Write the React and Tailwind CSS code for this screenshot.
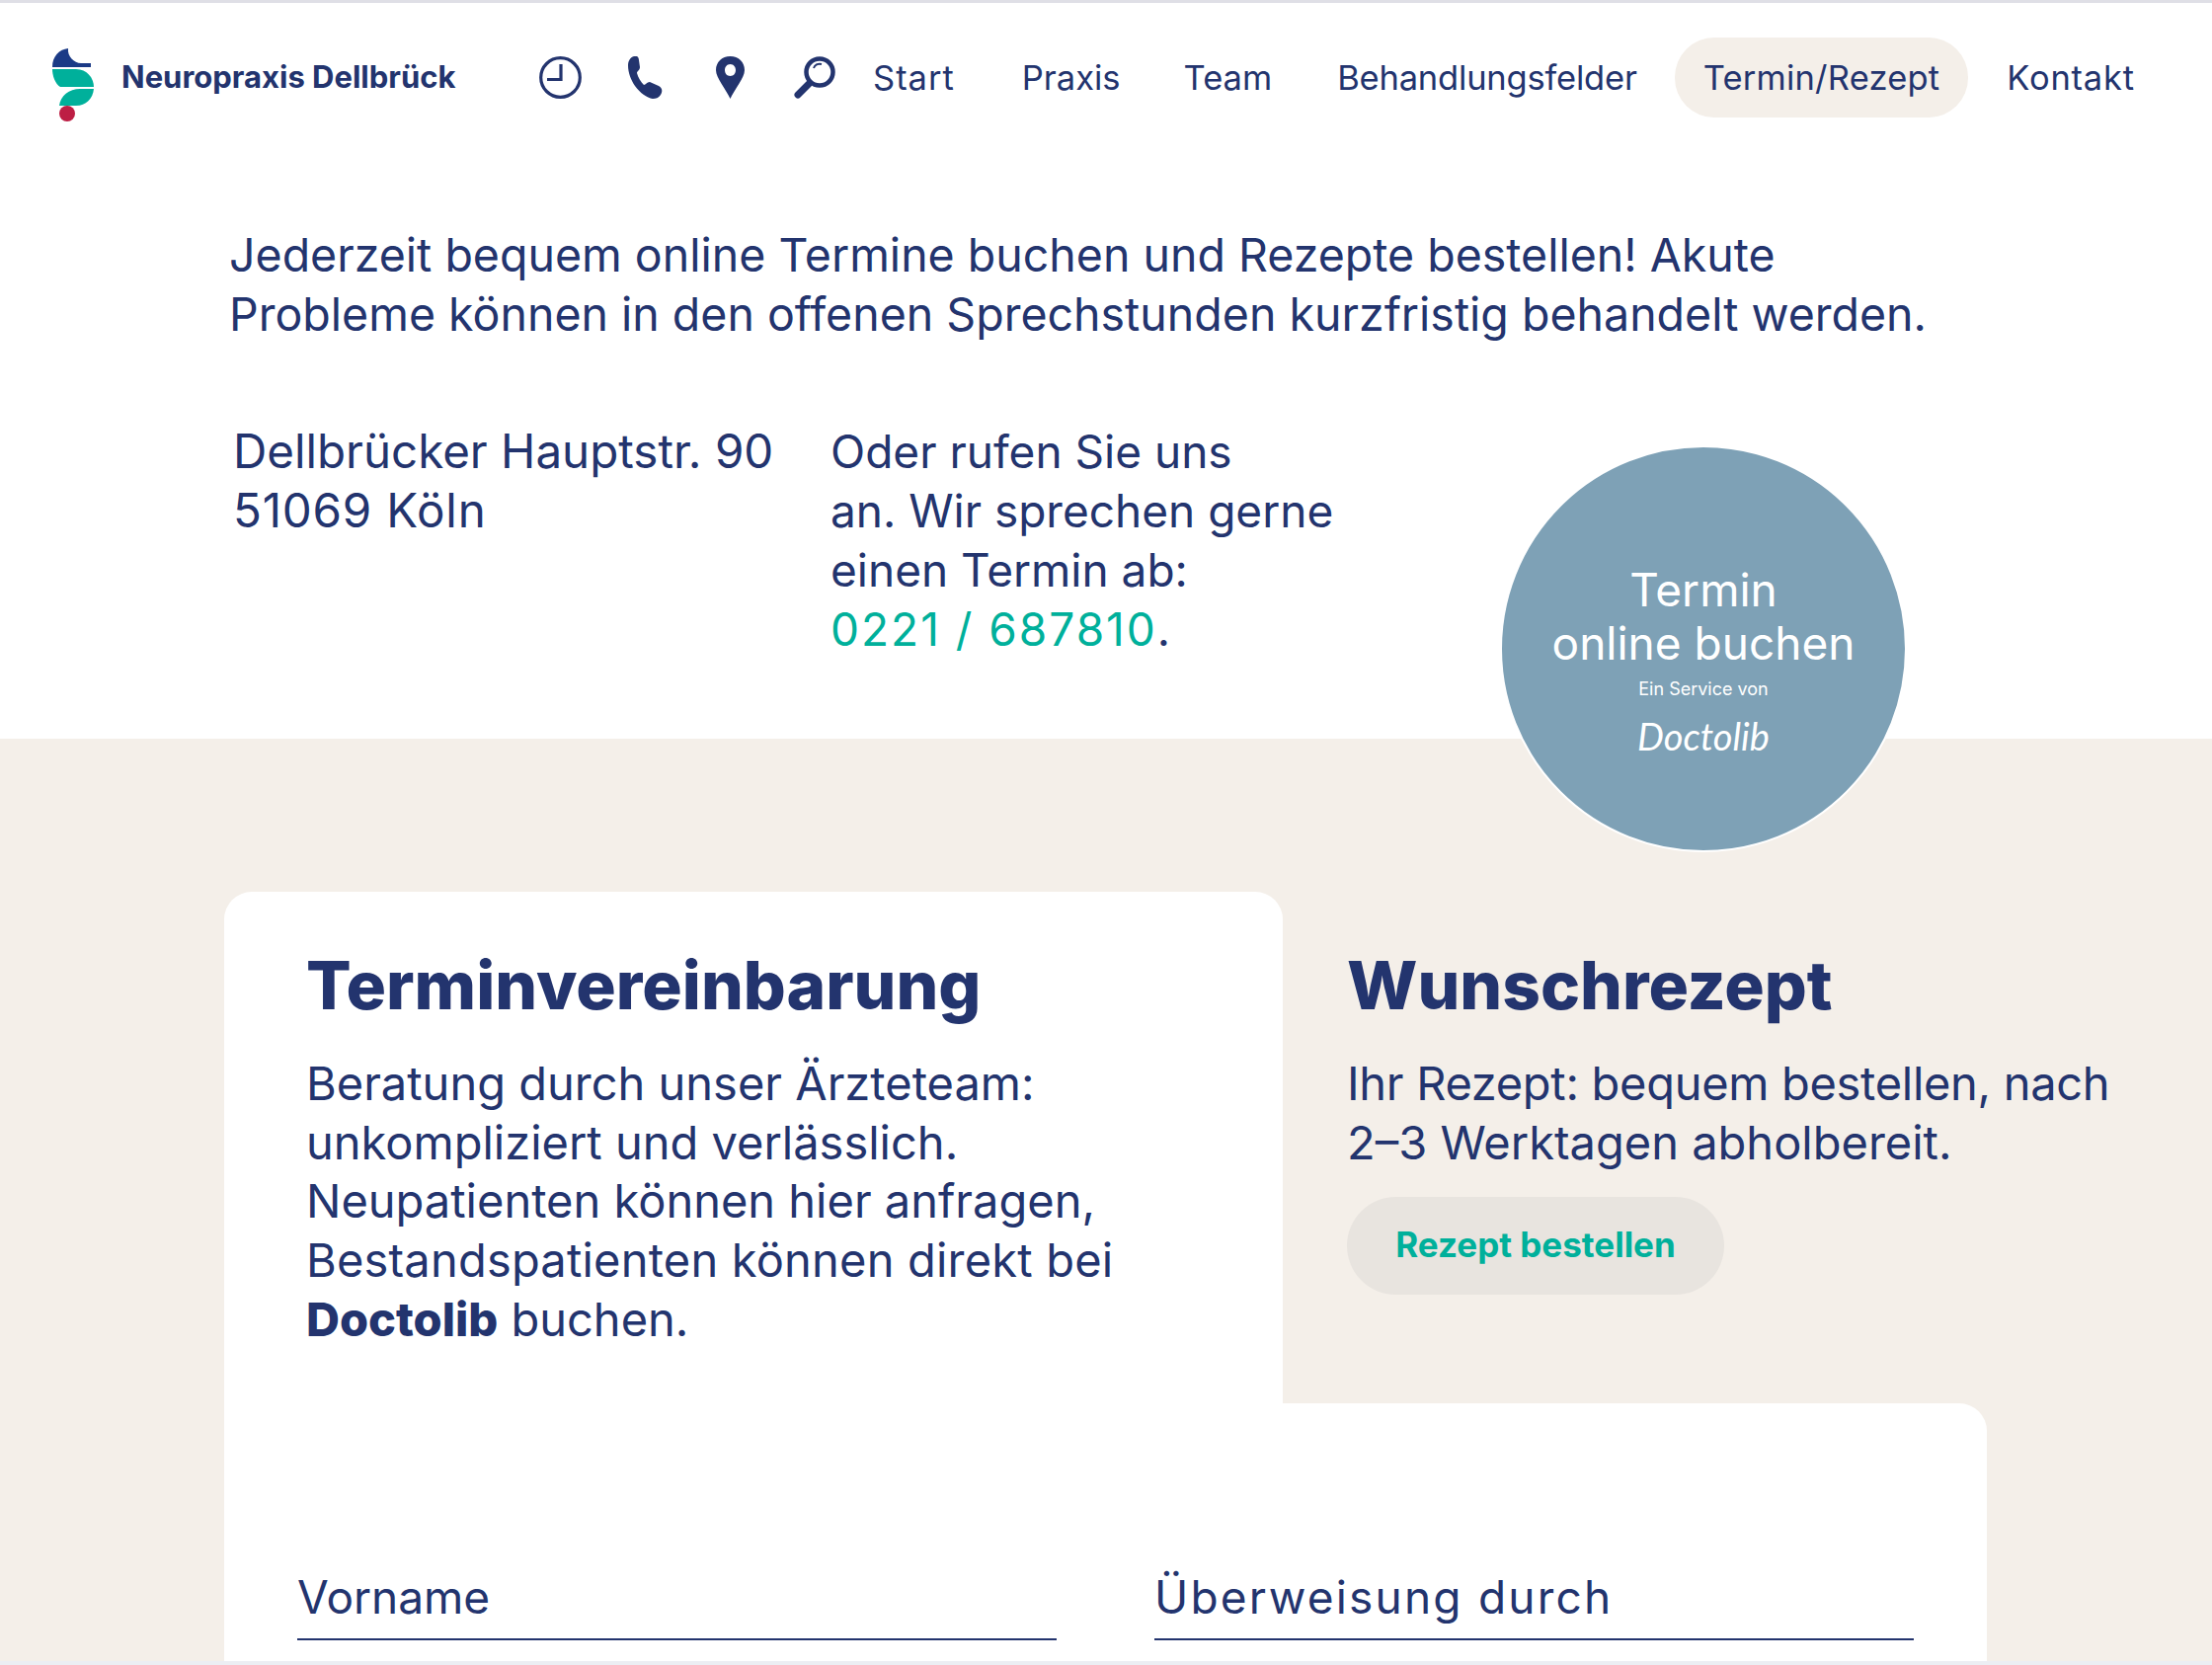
import React from 'react';

const navy = '#23346e';

// --- Logo and header icons ---
const Logo = () => (
    <svg viewBox="0 0 42 74" className="w-[42px] h-[74px] shrink-0 mt-[15px]">
        <path d="M0 19 C0 8 7 1 16 0 C15 8 22 15 29 15 L39 15 L39 19 Z" fill="#1b3a86" />
        <path d="M0 21 L24 21 C35 21 42 30 42 39 L8 39 C3 36 0 28 0 21 Z" fill="#00b09b" />
        <path d="M7 58 C8 48 17 41 28 41 L42 41 C41 51 34 58 24 58 Z" fill="#00b09b" />
        <circle cx="15" cy="66" r="8" fill="#bd1e44" />
    </svg>
);

const ClockIcon = () => (
    <svg viewBox="0 0 43 43" className="w-[43px] h-[43px]" fill="none" stroke={navy} strokeWidth="3.2">
        <circle cx="21.5" cy="21.5" r="19.8" />
        <path d="M22 8 V23.5 H8" />
    </svg>
);

const PhoneIcon = () => (
    <svg viewBox="0 0 35 43" className="w-[35px] h-[43px]" fill={navy}>
        <path d="M6 0 C9 -1 11 1 11 4 L12 11 C12 14 9 15 9 17 C10 21 13 26 16 29 C18 29 19 26 22 26 L31 30 C35 32 35 36 33 39 C31 42 28 43 25 43 C19 42 12 37 7 30 C3 24 0 17 0 9 C0 5 2 1 6 0 Z" />
    </svg>
);

const PinIcon = () => (
    <svg viewBox="0 0 29 43" className="w-[29px] h-[43px]" fill={navy}>
        <path fillRule="evenodd" d="M14.5 0 C23 0 29 6 29 14 C29 22 19 33 14.5 43 C10 33 0 22 0 14 C0 6 6 0 14.5 0 Z M14.5 8 C11 8 9 11 9 14 C9 17 11 20 14.5 20 C18 20 20 17 20 14 C20 11 18 8 14.5 8 Z" />
    </svg>
);

const SearchIcon = () => (
    <svg viewBox="0 0 42 43" className="w-[42px] h-[43px]" fill="none" stroke={navy}>
        <circle cx="26" cy="16" r="13.5" strokeWidth="4.5" />
        <path d="M20 12 C21 9 24 7 28 8" strokeWidth="2" />
        <path d="M15 28 L4 39" strokeWidth="7" strokeLinecap="round" />
    </svg>
);

const NavLink = ({ children, className = '' }) => (
    <a className={`block text-[34.5px] leading-[81px] whitespace-nowrap ${className}`}>{children}</a>
);

const Field = ({ label, className = '' }) => (
    <div className={`w-[769px] h-[68px] border-b-2 border-[#23346e] text-[46px] leading-[48px] ${className}`}>{label}</div>
);

const App = () => (
    <div className="h-[1686px] overflow-hidden flex flex-col relative bg-white text-[#23346e] font-['Inter',sans-serif]">
        {/* Header */}
        <header className="h-[160px] shrink-0 border-t-[3px] border-[#dfdfe6] flex items-center pl-[53px] pb-[6px]">
            <Logo />
            <span className="ml-[28px] w-[338px] text-[31px] font-bold whitespace-nowrap">Neuropraxis Dellbrück</span>
            <div className="ml-[85px] flex items-center">
                <ClockIcon />
                <div className="ml-[47px]"><PhoneIcon /></div>
                <div className="ml-[54px]"><PinIcon /></div>
                <div className="ml-[50px]"><SearchIcon /></div>
            </div>
            <nav className="ml-[38px] flex items-center">
                <NavLink className="tracking-[1px]">Start</NavLink>
                <NavLink className="ml-[68px]">Praxis</NavLink>
                <NavLink className="ml-[64px]">Team</NavLink>
                <NavLink className="ml-[66px] tracking-[-0.2px]">Behandlungsfelder</NavLink>
                <NavLink className="ml-[38px] px-[29px] tracking-[0.2px] bg-[#f4efe9] rounded-[40px]">Termin/Rezept</NavLink>
                <NavLink className="ml-[39px] tracking-[0.8px]">Kontakt</NavLink>
            </nav>
        </header>

        {/* Intro */}
        <section className="h-[588px] shrink-0 pl-[232px] pt-[69px]">
            <p className="text-[46.5px] leading-[59.5px] whitespace-nowrap">
                Jederzeit bequem online Termine buchen und Rezepte bestellen! Akute<br />
                Probleme können in den offenen Sprechstunden kurzfristig behandelt werden.
            </p>
            <div className="flex mt-[79px] leading-[60px]">
                <p className="w-[609px] pl-[4px] text-[47.5px]">Dellbrücker Hauptstr. 90<br /><span className="tracking-[0.8px]">51069 Köln</span></p>
                <p className="whitespace-nowrap text-[46px]">
                    Oder rufen Sie uns<br />an. Wir sprechen gerne<br />einen Termin ab:<br />
                    <span className="text-[#00b09b] tracking-[2px]">0221 / 687810</span>.
                </p>
            </div>
        </section>

        {/* Doctolib badge, sits over the section edge */}
        <a className="absolute left-[1519px] top-[451px] w-[412px] h-[412px] rounded-full border-2 border-white bg-[#7ea1b6] text-white text-center flex flex-col items-center pt-[117px]">
            <span className="text-[46px] leading-[54px]">Termin<br />online buchen</span>
            <span className="text-[18px] leading-[24px] mt-[8px]">Ein Service von</span>
            <span className="text-[38px] leading-[48px] mt-[11px] italic font-normal font-['Lato',sans-serif]">Doctolib</span>
        </a>

        {/* Beige section */}
        <section className="flex-1 min-h-0 bg-[#f4efe9] pl-[227px] pt-[155px]">
            <div className="flex">
                <div className="w-[1072px] h-[518px] bg-white rounded-t-[28px] pl-[83px] pt-[50px]">
                    <h2 className="text-[67.5px] leading-[90px] font-extrabold">Terminvereinbarung</h2>
                    <p className="mt-[24px] text-[47px] leading-[59.7px] whitespace-nowrap">
                        Beratung durch unser Ärzteteam:<br />
                        unkompliziert und verlässlich.<br />
                        Neupatienten können hier anfragen,<br />
                        <span className="tracking-[0.2px]">Bestandspatienten können direkt bei</span><br />
                        <b className="font-extrabold">Doctolib</b> buchen.
                    </p>
                </div>
                <div className="pl-[65px] pt-[50px]">
                    <h2 className="text-[67.5px] leading-[90px] font-extrabold">Wunschrezept</h2>
                    <p className="mt-[24px] text-[47px] leading-[59.7px] whitespace-nowrap">
                        <span className="tracking-[-0.3px]">Ihr Rezept: bequem bestellen, nach</span><br />
                        2–3 Werktagen abholbereit.
                    </p>
                    <a className="mt-[26px] w-[382px] h-[99px] pb-[4px] rounded-[50px] bg-[#e8e4df] text-[#00b09b] text-[35px] font-bold flex items-center justify-center">Rezept bestellen</a>
                </div>
            </div>
            <div className="w-[1785px] h-[262px] bg-white rounded-tr-[28px] flex pl-[74px] pt-[172px] gap-[99px]">
                <Field label="Vorname" />
                <Field label="Überweisung durch" className="tracking-[2.2px]" />
            </div>
        </section>
        <div className="h-[4px] shrink-0 bg-[#eceef3]"></div>
    </div>
);

export default App;
